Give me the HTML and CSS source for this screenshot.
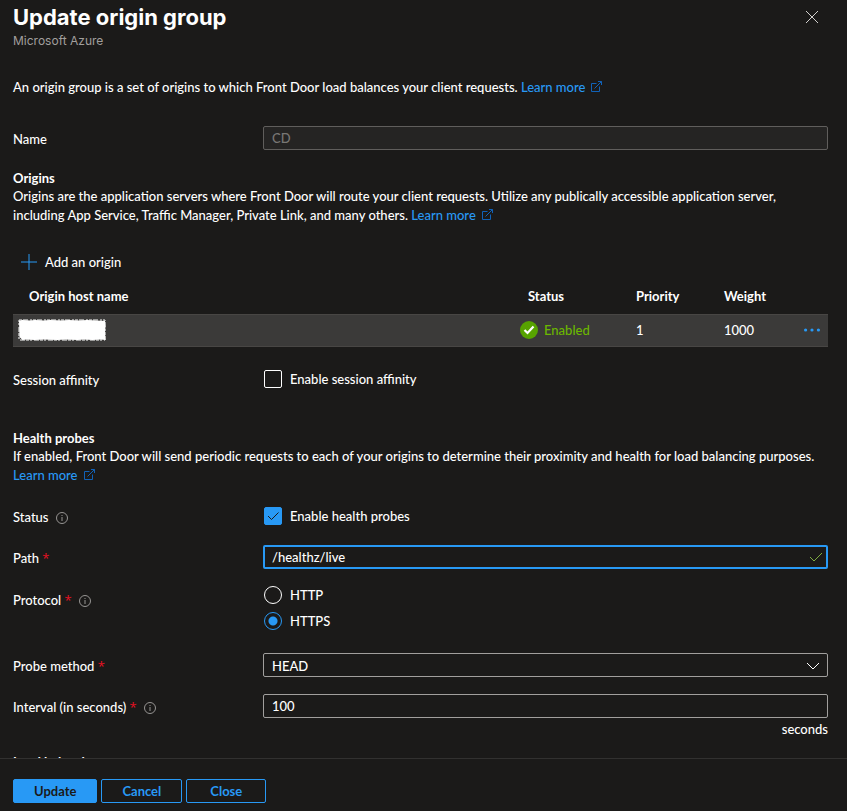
FILE: index.html
```
<!DOCTYPE html>
<html lang="en">

<head>
    <meta charset="UTF-8">
    <title>Update origin group</title>
    <link rel="stylesheet" href="styles.css">
</head>

<body>
    <svg class="symbols" aria-hidden="true">
        <symbol id="external" viewBox="0 0 13 13">
            <path d="M6.5 3.5H1.5v8h8V6.500M4.500 8.500L11.500 1.500M8 1.500h3.500V5" />
        </symbol>
        <symbol id="info" viewBox="0 0 12 12">
            <circle cx="6" cy="6" r="5.500" />
            <path d="M6 5v4M6 3v1" />
        </symbol>
    </svg>
    <div id="blade">
        <header class="blade_header">
            <div>
                <h1>Update origin group</h1>
                <div class="subtitle">Microsoft Azure</div>
            </div>
            <button type="button" class="close" aria-label="Close">
                <svg width="14" height="14" viewBox="0 0 14 14"><path d="M1 1l12 12M13 1L1 13" /></svg>
            </button>
        </header>
        <main class="blade_body">
            <p>An origin group is a set of origins to which Front Door load balances your client requests. <a href="#">Learn more<svg class="external"><use href="#external" /></svg></a></p>

            <div class="row row_name">
                <label for="name">Name</label>
                <input class="text" type="text" id="name" value="CD" disabled>
            </div>

            <h2 class="origins_title">Origins</h2>
            <p class="origins_text">Origins are the application servers where Front Door will route your client requests. Utilize any publically accessible application server, including App Service, Traffic Manager, Private Link, and many others. <a href="#">Learn more<svg class="external"><use href="#external" /></svg></a></p>

            <button type="button" class="add">
                <svg width="16" height="16" viewBox="0 0 16 16"><path d="M8 0v16M0 8h16" /></svg>Add an origin
            </button>
            <table class="origins">
                <thead>
                    <tr>
                        <th class="col_host">Origin host name</th>
                        <th class="col_status">Status</th>
                        <th class="col_priority">Priority</th>
                        <th class="col_weight">Weight</th>
                        <th class="col_more"></th>
                    </tr>
                </thead>
                <tbody>
                    <tr>
                        <td class="host">
                            <svg width="88" height="22" viewBox="0 0 88 22">
                                <path d="M1 2l3-1 8 .5 5-.5 9 .5 6-.5 12 .5 7-.5 10 .5 8-.5 18 1 .5 6-.5 5 .5 8-5-.5-8 .5-9-.5-6 .5-12-.5-8 .5-14-.5-9 .5-8-.5-4 .5-3-3z" fill="#fff" />
                                <rect x="1" y="1" width="86" height="20" fill="none" stroke="#fff" stroke-dasharray="3 1 5 2 2 1" />
                            </svg>
                        </td>
                        <td>
                            <span class="enabled">
                                <svg width="18" height="18" viewBox="0 0 18 18">
                                    <circle cx="9" cy="9" r="9" fill="#57a300" />
                                    <path d="M4.500 9l3 3 6-6.500" fill="none" stroke="#fff" stroke-width="2.200" />
                                </svg>Enabled
                            </span>
                        </td>
                        <td>1</td>
                        <td>1000</td>
                        <td class="more">
                            <button type="button" aria-label="More">
                                <svg width="16" height="4" viewBox="0 0 16 4">
                                    <circle cx="1.600" cy="2" r="1.600" /><circle cx="8" cy="2" r="1.600" /><circle cx="14.400" cy="2" r="1.600" />
                                </svg>
                            </button>
                        </td>
                    </tr>
                </tbody>
            </table>

            <div class="row row_session">
                <span class="label">Session affinity</span>
                <label class="choice"><input type="checkbox">Enable session affinity</label>
            </div>

            <h2 class="probes_title">Health probes</h2>
            <p>If enabled, Front Door will send periodic requests to each of your origins to determine their proximity and health for load balancing purposes. <a href="#">Learn more<svg class="external"><use href="#external" /></svg></a></p>

            <div class="row row_status">
                <span class="label">Status <svg class="info"><use href="#info" /></svg></span>
                <label class="choice">
                    <span class="check">
                        <input type="checkbox" checked>
                        <svg width="12" height="10" viewBox="0 0 12 10"><path d="M1 5l3.500 3.500L11.500 1.500" /></svg>
                    </span>Enable health probes
                </label>
            </div>
            <div class="row row_path">
                <label for="path">Path <b>*</b></label>
                <div class="field">
                    <input class="text focused" type="text" id="path" value="/healthz/live">
                    <svg class="valid" width="14" height="10" viewBox="0 0 14 10"><path d="M1 5l4 4 8-8" /></svg>
                </div>
            </div>
            <div class="row row_protocol">
                <span class="label">Protocol <b>*</b> <svg class="info"><use href="#info" /></svg></span>
                <div>
                    <label class="choice"><input type="radio" name="protocol">HTTP</label>
                    <label class="choice"><input type="radio" name="protocol" checked>HTTPS</label>
                </div>
            </div>
            <div class="row row_method">
                <label for="method">Probe method <b>*</b></label>
                <div class="field">
                    <select class="text" id="method">
                        <option>HEAD</option>
                    </select>
                    <svg class="chevron" width="14" height="8" viewBox="0 0 14 8"><path d="M1 1l6 6 6-6" /></svg>
                </div>
            </div>
            <div class="row row_interval">
                <label for="interval">Interval (in seconds) <b>*</b> <svg class="info"><use href="#info" /></svg></label>
                <div>
                    <input class="text" type="text" id="interval" value="100">
                    <div class="unit">seconds</div>
                </div>
            </div>

            <h2 class="balancing_title">Load balancing</h2>
        </main>
        <footer class="blade_footer">
            <button type="button" class="btn primary">Update</button>
            <button type="button" class="btn">Cancel</button>
            <button type="button" class="btn">Close</button>
        </footer>
    </div>
</body>

</html>
```
FILE: styles.css
```
* {
    margin: 0;
    padding: 0;
    box-sizing: border-box;
}

body {
    background-color: #1b1a19;
    color: #fff;
    font: 500 13px/19px Lato, "Open Sans", sans-serif;
}

button,
input,
select {
    font: inherit;
    color: inherit;
}

button {
    background: none;
    border: 0;
}

svg {
    fill: none;
    stroke-width: 1;
}

a {
    color: #2899f5;
    text-decoration: none;
    white-space: nowrap;
}

.symbols {
    display: none;
}

#blade {
    display: flex;
    flex-direction: column;
    height: 100vh;
}

.blade_header {
    display: flex;
    justify-content: space-between;
    align-items: flex-start;
    padding: 0 28px 0 13px;
}

.blade_header h1 {
    font: bold 22px/34px Inter, sans-serif;
}

.subtitle {
    font: 12px/14px Inter, sans-serif;
    color: #a19f9d;
}

.close {
    padding: 10px 0;
    line-height: 0;
    stroke: #d2d0ce;
}

.blade_body {
    flex: 1;
    min-height: 0;
    overflow: hidden;
    padding: 30px 19px 0 13px;
}

.blade_body h2 {
    font-size: 13px;
    font-weight: 700;
    line-height: 18px;
}

.origins_text {
    padding-right: 16px;
}

.external {
    width: 13px;
    height: 13px;
    margin-left: 5px;
    stroke: #1162b8;
    vertical-align: -1px;
}

/* form rows */
.row {
    display: grid;
    grid-template-columns: 250px 1fr;
    line-height: 24px;
}

.row > label:first-child,
.row > .label {
    padding-top: 1px;
}

.row b {
    color: #e81123;
    font-family: "Open Sans", sans-serif;
    font-weight: 400;
    line-height: 1;
}

.row_name {
    margin-top: 29px;
}

.row_session {
    margin-top: 20px;
}

.row_status {
    margin-top: 19px;
}

.row_path,
.row_interval {
    margin-top: 16px;
}

.row_protocol {
    margin-top: 12px;
}

.row_protocol > .label {
    padding-top: 6px;
}

.row_method {
    margin-top: 19px;
}

.origins_title {
    margin-top: 18px;
}

.probes_title {
    margin-top: 37px;
}

.balancing_title {
    margin-top: 15px;
}

.info {
    width: 12px;
    height: 12px;
    margin-left: 4px;
    stroke: #979593;
    vertical-align: -2px;
}

.text {
    display: block;
    width: 100%;
    height: 24px;
    padding: 0 8px;
    background-color: #1b1a19;
    border: 1px solid #a19f9d;
    border-radius: 2px;
    outline: none;
    appearance: none;
}

.text:disabled {
    background-color: #252423;
    border-color: #605e5c;
    color: #797775;
}

.text.focused {
    padding: 0 7px;
    border: 2px solid #2899f5;
}

.field {
    position: relative;
}

.valid {
    position: absolute;
    right: 5px;
    top: 7px;
    stroke: #7fae42;
}

.chevron {
    position: absolute;
    right: 8px;
    top: 9px;
    stroke: #fff;
    pointer-events: none;
}

.choice {
    display: flex;
    align-items: center;
    gap: 8px;
}

.choice input {
    width: 18px;
    height: 18px;
    margin-left: 1px;
    border: 1px solid #fff;
    border-radius: 2px;
    appearance: none;
}

.choice input[type="checkbox"]:checked {
    background-color: #2899f5;
    border-color: #2899f5;
}

.check {
    display: flex;
    position: relative;
}

.check svg {
    position: absolute;
    left: 4px;
    top: 4px;
    stroke: #1b1a19;
}

.row_protocol .choice {
    line-height: 26px;
}

.choice input[type="radio"] {
    border-radius: 50%;
}

.choice input[type="radio"]:checked {
    border-color: #2899f5;
    background: radial-gradient(circle, #2899f5 4px, transparent 5px);
}

.unit {
    padding-top: 2px;
    line-height: 18px;
    text-align: right;
}

/* origins table */
.add {
    display: flex;
    align-items: center;
    gap: 8px;
    height: 24px;
    margin-top: 25px;
    padding-left: 8px;
}

.add svg {
    stroke: #2899f5;
}

.origins {
    width: 100%;
    border-collapse: collapse;
    table-layout: fixed;
}

.origins th {
    height: 40px;
    padding-top: 6px;
    font-weight: 700;
    text-align: left;
}

.origins td {
    height: 32px;
    background-color: #3b3a39;
    border-top: 1px solid #484644;
    border-bottom: 1px solid #484644;
}

.origins .col_host {
    padding-left: 16px;
}

.origins .col_status {
    width: 116px;
    padding-left: 8px;
}

.col_priority {
    width: 88px;
}

.col_weight {
    width: 80px;
}

.col_more {
    width: 24px;
}

.host {
    padding-left: 5px;
    line-height: 0;
}

.enabled {
    display: flex;
    align-items: center;
    gap: 6px;
    color: #6bb700;
}

.more button {
    display: flex;
    height: 19px;
    align-items: center;
}

.more svg {
    fill: #2899f5;
}

/* footer */
.blade_footer {
    display: flex;
    gap: 4px;
    padding: 20px 13px 8px;
    border-top: 1px solid #323130;
}

.btn {
    min-width: 80px;
    height: 24px;
    padding: 0 20px;
    border: 1px solid #2899f5;
    border-radius: 2px;
    color: #2899f5;
    font-weight: 700;
    line-height: 22px;
}

.btn.primary {
    background-color: #2899f5;
    color: #1b1a19;
}
```
